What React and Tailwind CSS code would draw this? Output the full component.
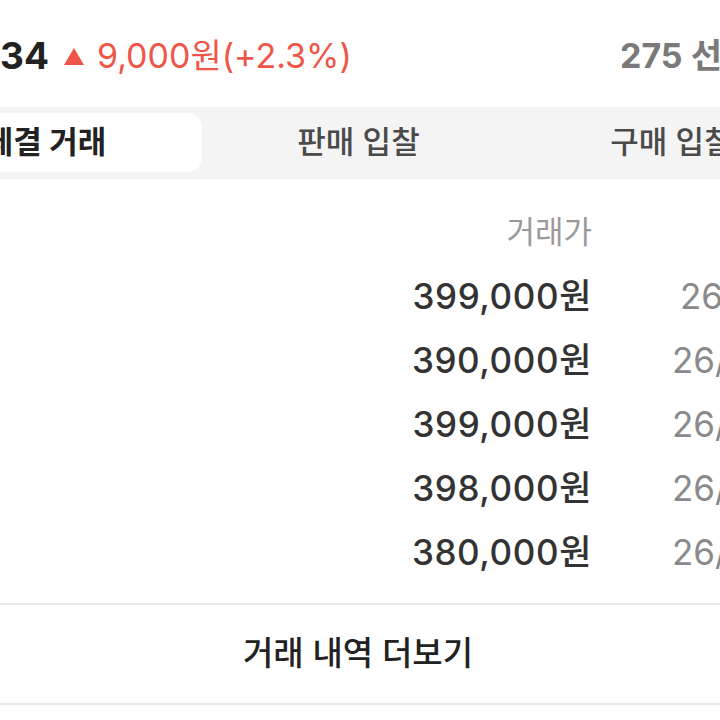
export default function App() {
  const font = { fontFamily: '"Inter", "Noto Sans CJK KR", sans-serif' };
  const rows = [
    { price: "399,000원", date: "26/01/21", pad: "pl-[88px]" },
    { price: "390,000원", date: "26/01/20", pad: "pl-[80px]" },
    { price: "399,000원", date: "26/01/19", pad: "pl-[80px]" },
    { price: "398,000원", date: "26/01/18", pad: "pl-[80px]" },
    { price: "380,000원", date: "26/01/17", pad: "pl-[80px]" },
  ];
  return (
    <div className="w-[720px] h-[720px] overflow-hidden bg-white" style={font}>
      {/* top row */}
      <div className="h-[107px] flex items-center justify-between whitespace-nowrap">
        <div className="flex items-center pt-[4px] shrink-0">
          <span className="text-[37px] font-bold text-[#222] leading-none">34</span>
          <svg className="ml-[15px] mt-[2px] shrink-0" width="20" height="17" viewBox="0 0 20 17">
            <polygon points="10,0 20,17 0,17" fill="#ee5747" />
          </svg>
          <span className="ml-[13px] text-[34px] text-[#ee5747] leading-none">9,000원(+2.3%)</span>
        </div>
        <div className="w-[100px] shrink-0 flex pt-[4px] overflow-hidden">
          <span className="text-[34px] font-bold text-[#7a7a7a] leading-none">275 선택</span>
        </div>
      </div>

      {/* tabs */}
      <div className="h-[72px] bg-[#f4f4f4] border-b border-[#ededed] overflow-hidden">
        <div className="ml-[-111px] w-[939px] h-full grid grid-cols-3 py-[6px]">
          <div className="bg-white rounded-[14px] flex items-center justify-center text-[31px] font-bold text-[#222] whitespace-nowrap">
            체결 거래
          </div>
          <div className="flex items-center justify-center text-[31px] font-medium text-[#4a4a4a] whitespace-nowrap">
            판매 입찰
          </div>
          <div className="flex items-center justify-center text-[31px] font-medium text-[#4a4a4a] whitespace-nowrap">
            구매 입찰
          </div>
        </div>
      </div>

      {/* table */}
      <div className="mt-[21px]">
        <div className="h-[64px] flex items-center whitespace-nowrap">
          <div className="w-[592px] shrink-0 text-right text-[31px] text-[#9a9a9a]">거래가</div>
        </div>
        {rows.map((r, i) => (
          <div key={i} className="h-[64px] flex items-center whitespace-nowrap">
            <div className="w-[592px] shrink-0 text-right text-[35px] font-medium text-[#333] tracking-[0.6px]">{r.price}</div>
            <div className={`${r.pad} shrink-0 text-[35px] text-[#8a8a8a]`}>{r.date}</div>
          </div>
        ))}
      </div>

      {/* more button */}
      <div className="mt-[19px] border-t-[2px] border-b-[2px] border-[#e9e9e9] h-[102px] flex items-center justify-center">
        <span className="text-[33px] font-medium text-[#222] mr-[4px]">거래 내역 더보기</span>
      </div>
    </div>
  );
}
